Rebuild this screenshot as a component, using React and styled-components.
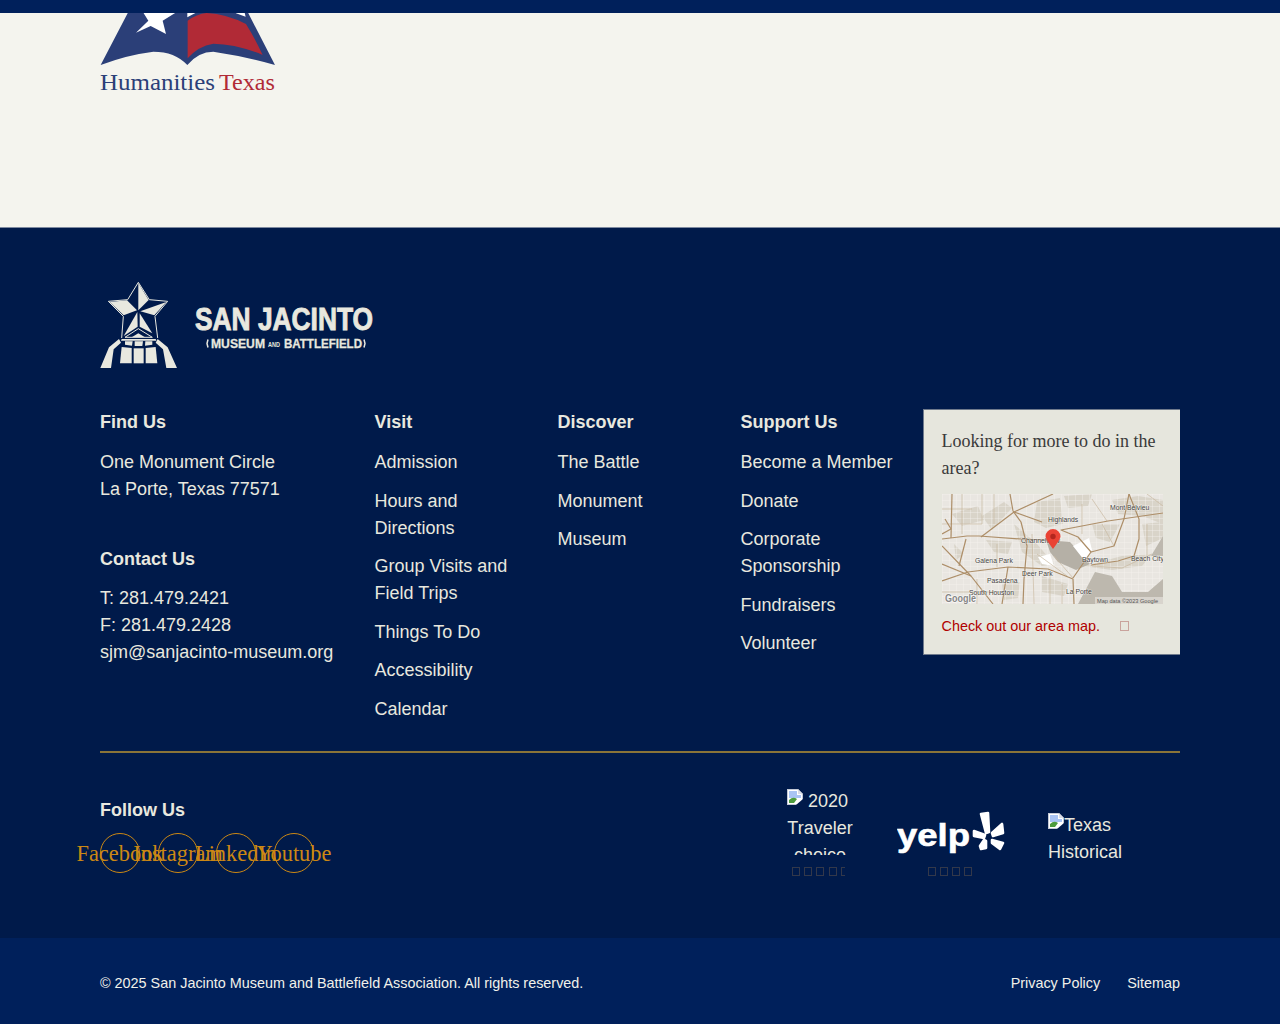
import React from 'react'
import styled, { createGlobalStyle } from 'styled-components'

const cream = '#e8e8df'
const sans = '"Liberation Sans", Arial, sans-serif'
const serif = '"Liberation Serif", "Times New Roman", serif'

const visitLinks = [
	'Admission',
	'Hours and Directions',
	'Group Visits and Field Trips',
	'Things To Do',
	'Accessibility',
	'Calendar'
]
const discoverLinks = ['The Battle', 'Monument', 'Museum']
const supportLinks = [
	'Become a Member',
	'Donate',
	'Corporate Sponsorship',
	'Fundraisers',
	'Volunteer'
]
const socials = ['Facebook', 'Instagram', 'LinkedIn', 'Youtube']

const HumanitiesLogo = () => (
	<svg width="176" height="80" viewBox="100 13 176 80">
		<g transform="translate(80 0) scale(0.3333)">
			<path
				d="M62 195 L148 30 L500 30 L585 195 Q500 170 400 155 Q355 155 322 195 Q285 155 220 155 Q140 165 62 195 Z"
				fill="#2b3f78"
			/>
			<path d="M185 30 L205 62 L168 98 L212 78 L258 102 L248 62 L300 30 Z" fill="#fff" />
			<path d="M322 30 L322 52 L348 38 L350 30 Z" fill="#fff" />
			<path d="M462 30 L468 40 L497 50 L492 30 Z" fill="#fff" />
			<path
				d="M323 62 Q350 42 380 39 Q440 42 498 72 Q525 115 548 165 Q470 132 400 131 Q355 138 323 175 Z"
				fill="#b12a36"
			/>
		</g>
		<text x="100" y="89.500" fontFamily={serif} fontSize="24" fill="#2b3f78" textLength="115" lengthAdjust="spacingAndGlyphs">
			Humanities
		</text>
		<text x="219" y="89.500" fontFamily={serif} fontSize="24" fill="#b12a36" textLength="56" lengthAdjust="spacingAndGlyphs">
			Texas
		</text>
	</svg>
)

const JacintoLogo = () => (
	<svg width="273" height="87" viewBox="0 0 273 87">
		<g transform="translate(-5 -4) scale(0.3333)" fill={cream} stroke={cream}>
			<path
				d="M130 13 L163 65 L218 70 L180 115 L188 180 M130 13 L98 65 L40 70 L85 115 L80 180"
				fill="none"
				strokeWidth="3"
			/>
			<path d="M130 15 L161 66 L130 97 Z" strokeWidth="0" />
			<path d="M44 72 L96 67 L126 97 L86 112 Z" strokeWidth="0" />
			<path d="M214 72 L136 100 L178 112 Z" strokeWidth="0" />
			<path d="M127 102 L128 146 L86 174 Z" strokeWidth="0" />
			<path d="M134 106 L172 166 L134 146 Z" strokeWidth="0" />
			<path d="M130 152 L172 178 L90 178 Z" fill="none" strokeWidth="3" />
			<path d="M130 166 L150 178 L110 178 Z" strokeWidth="0" />
			<path d="M16 270 L42 208 L72 183 L78 194 L56 214 L48 270 Z" strokeWidth="0" />
			<path d="M246 270 L218 208 L188 183 L182 194 L204 214 L214 270 Z" strokeWidth="0" />
			<path d="M80 183 L182 183 L184 188 L78 188 Z" strokeWidth="0" />
			<path d="M90 190 L113 190 L111 203 L90 200 Z" strokeWidth="0" />
			<path d="M119 190 L144 190 L142 204 L119 204 Z" strokeWidth="0" />
			<path d="M151 190 L172 190 L172 200 L150 203 Z" strokeWidth="0" />
			<path d="M80 207 L110 210 L110 256 L75 256 Z" strokeWidth="0" />
			<path d="M116 211 L146 211 L146 256 L116 256 Z" strokeWidth="0" />
			<path d="M152 210 L182 207 L187 256 L152 256 Z" strokeWidth="0" />
		</g>
		<g fill={cream} fontFamily={sans} fontWeight="700">
			<text x="95" y="48" fontSize="31" stroke={cream} strokeWidth="0.900" textLength="178" lengthAdjust="spacingAndGlyphs">
				SAN JACINTO
			</text>
			<text x="111" y="66" fontSize="13.500" stroke={cream} strokeWidth="0.300" textLength="54" lengthAdjust="spacingAndGlyphs">
				MUSEUM
			</text>
			<text x="168" y="65" fontSize="7.500" textLength="12" lengthAdjust="spacingAndGlyphs">
				AND
			</text>
			<text x="184" y="66" fontSize="13.500" stroke={cream} strokeWidth="0.300" textLength="78" lengthAdjust="spacingAndGlyphs">
				BATTLEFIELD
			</text>
		</g>
		<path d="M108 57.500 L107 61.500 L108 65.500 M264 57.500 L265 61.500 L264 65.500" fill="none" stroke={cream} strokeWidth="1.500" />
	</svg>
)

const roads = [
	'M10 0 L9 44',
	'M0 45 L25 42 L37 42 L79 45 L106 46',
	'M39 43 L72 18 L111 0',
	'M68 0 L71 17 L79 28 L85 52 L82 85 L81 110',
	'M0 87 L26 78 L66 73 L106 75 L131 85 L132 110',
	'M131 84 L149 58 L136 43 L119 36 L166 27 L221 19',
	'M149 58 L172 52 L182 25 L187 0',
	'M187 0 L197 25 L197 45 L192 62 L176 67 L149 71',
	'M0 52 L29 82 L51 110',
	'M24 45 L17 72',
	'M0 70 L29 82',
	'M3 25 L9 35 L0 40',
	'M60 110 L66 73',
	'M72 18 L100 28'
]

const minorRoads = [
	'M0 30 H40 M0 15 H30 M20 0 V40 M40 0 V30 M52 0 L52 30',
	'M95 60 L125 82 M112 62 L131 84 M90 40 L92 110 M108 78 L108 110',
	'M150 5 L165 27 M140 10 L140 40 M205 0 L221 12 M205 30 L205 62',
	'M150 72 L180 74 L210 60 M160 30 L172 52 M120 90 L120 110',
	'M35 85 L35 110 M0 98 H60 M55 50 L55 73'
]

const mapPatches = [
	'M95 8 L118 4 L121 30 L104 34 L92 28 Z',
	'M40 22 L62 8 L70 14 L50 36 Z',
	'M72 30 L95 50 L112 70 L100 72 L80 58 Z',
	'M10 20 L36 12 L42 26 L20 32 Z',
	'M170 6 L196 2 L221 6 L221 30 L200 22 L176 20 Z',
	'M200 30 L221 28 L221 44 L204 52 Z',
	'M140 72 L170 76 L200 72 L210 60 L180 62 L150 70 Z',
	'M44 46 L70 48 L66 60 L52 58 Z',
	'M122 2 L150 0 L146 12 L126 14 Z',
	'M150 30 L178 30 L168 48 L154 44 Z',
	'M60 90 L78 88 L76 104 L62 106 Z',
	'M12 50 L22 60 L14 66 Z',
	'M100 82 L126 90 L122 102 L100 98 Z'
]

const mapLabels = [
	['Mont Belvieu', 168, 15.5],
	['Highlands', 106, 27.5],
	['Channelview', 79, 48.5],
	['Galena Park', 33, 68.5],
	['Baytown', 140, 68],
	['Beach City', 189, 66.5],
	['Deer Park', 80, 81.5],
	['Pasadena', 45, 88.5],
	['La Porte', 124, 99.5],
	['South Houston', 27, 100.5]
]

const AreaMap = () => (
	<svg width="221" height="110" viewBox="0 0 221 110">
		<defs>
			<pattern id="streets" width="7" height="6" patternUnits="userSpaceOnUse">
				<path d="M0 0 H7 M0 0 V6" stroke="#f6f4f0" strokeWidth="0.7" fill="none" />
			</pattern>
		</defs>
		<rect width="221" height="110" fill="#e9e6e1" />
		<g fill="#d9d4c9">
			{mapPatches.map(d => (
				<path key={d} d={d} />
			))}
		</g>
		<rect width="221" height="110" fill="url(#streets)" />
		<path d="M104 46 L128 48 L148 70 L134 76 L116 68 L108 58 Z" fill="#b5b0a6" />
		<path d="M136 110 L153 78 L170 82 L180 98 L206 98 L221 85 L221 110 Z M209 62 L221 42 L221 62 Z" fill="#bdb8ae" />
		<path d="M131 52 L147 44 L150 56 L142 66 Z M96 63 L108 60 L112 72 L100 70 Z" fill="#fff" />
		<g fill="none" stroke="#c9b9a0" strokeWidth="0.7">
			{minorRoads.map(d => (
				<path key={d} d={d} />
			))}
		</g>
		<g fill="none" stroke="#ad8e68" strokeWidth="1.200" strokeLinejoin="round">
			{roads.map(d => (
				<path key={d} d={d} />
			))}
		</g>
		<g fontFamily={sans} fontSize="6.800" fill="#45423d" stroke="#fff" strokeWidth="1" paintOrder="stroke" strokeOpacity="0.5">
			{mapLabels.map(([label, x, y]) => (
				<text key={label} x={x} y={y}>
					{label}
				</text>
			))}
		</g>
		<rect x="153" y="103" width="68" height="7" fill="#e9e6e1" opacity="0.6" />
		<text x="155" y="109" fontFamily={sans} fontSize="5.600" fill="#555">
			Map data ©2023 Google
		</text>
		<text
			x="3"
			y="107.500"
			fontFamily={sans}
			fontSize="11.500"
			fontWeight="700"
			fill="#858585"
			stroke="#fff"
			strokeWidth="1.200"
			paintOrder="stroke"
			textLength="31"
			lengthAdjust="spacingAndGlyphs"
		>
			Google
		</text>
		<path d="M111 55 Q103.500 45 103.500 42.500 A7.500 7.500 0 0 1 118.500 42.500 Q118.500 45 111 55 Z" fill="#ea4335" />
		<circle cx="111" cy="42.500" r="2.700" fill="#b3261e" />
	</svg>
)

const YelpLogo = () => (
	<svg width="108" height="44" viewBox="897 813 108 44">
		<text
			x="897"
			y="848"
			fontFamily={sans}
			fontSize="31"
			fontWeight="700"
			fill="#fff"
			stroke="#fff"
			strokeWidth="0.600"
			textLength="73"
			lengthAdjust="spacingAndGlyphs"
		>
			yelp
		</text>
		<g fill="#fff" stroke="#fff" strokeWidth="2.600" strokeLinejoin="round">
			<path d="M981 816 L988 815 L989 834 L986 835 Z" />
			<path d="M974 833 L985 837 L984 840 L974 838 Z" />
			<path d="M1002 826 L1003 835 L993 838 L992 835 Z" />
			<path d="M984 842 L986 843 L986 850 L981 851 L980 848 Z" />
			<path d="M992 842 L1003 845 L1000 851 L992 845 Z" />
		</g>
	</svg>
)

const BrokenImage = () => (
	<BrokenIcon width="16" height="16" viewBox="0 0 16 16">
		<path d="M0 0 H11 L16 5 V16 H0 Z" fill="#c3c9d6" />
		<path d="M1 1 H10.500 L15 5.500 V15 H1 Z" fill="#fff" />
		<path d="M2 2 H10 V6 H14 V9 H2 Z" fill="#a9c4f4" />
		<path d="M2 14 L2 11 Q6 7 10 10 L7 14 Z" fill="#4d9c3d" />
		<path d="M11 0 V5 H16 Z" fill="#d9dde6" />
		<path d="M9 16 L16 10 V16 Z" fill="#001a4a" />
	</BrokenIcon>
)

const Tofus = ({ count, offset, clip }) => (
	<TofuRow $offset={offset} $clip={clip}>
		{Array.from({ length: count }, (_, i) => (
			<Tofu key={i} />
		))}
	</TofuRow>
)

const LinkColumn = ({ title, links }) => (
	<div>
		<Heading>{title}</Heading>
		{links.map(link => (
			<NavLink key={link}>{link}</NavLink>
		))}
	</div>
)

const App = () => {
	return (
		<>
			<GlobalStyle />
			<TopBar />
			<Partners>
				<HumanitiesLogo />
			</Partners>
			<Footer>
				<JacintoLogo />
				<Columns>
					<div>
						<Heading>Find Us</Heading>
						<Lines>
							One Monument Circle
							<br />
							La Porte, Texas 77571
						</Lines>
						<ContactHeading>Contact Us</ContactHeading>
						<Lines>
							T: 281.479.2421
							<br />
							F: 281.479.2428
							<br />
							sjm@sanjacinto-museum.org
						</Lines>
					</div>
					<LinkColumn title="Visit" links={visitLinks} />
					<LinkColumn title="Discover" links={discoverLinks} />
					<LinkColumn title="Support Us" links={supportLinks} />
					<MapCard>
						<MapTitle>Looking for more to do in the area?</MapTitle>
						<MapFrame>
							<AreaMap />
						</MapFrame>
						<MapLink>
							Check out our area map.
							<MapArrow />
						</MapLink>
					</MapCard>
				</Columns>
				<Divider />
				<FollowRow>
					<div>
						<FollowHeading>Follow Us</FollowHeading>
						<SocialList>
							{socials.map(name => (
								<SocialLink key={name}>{name}</SocialLink>
							))}
						</SocialList>
					</div>
					<Badges>
						<Badge>
							<AltImage $width={66} $height={68} $top={1}>
								<BrokenImage /> 2020
								<CenteredAlt>Traveler choice</CenteredAlt>
							</AltImage>
							<Tofus count={5} offset={5} clip={53} />
						</Badge>
						<Badge>
							<YelpLogo />
							<Tofus count={4} offset={31} clip={60} />
						</Badge>
						<LastBadge>
							<AltImage $width={132} $height={56} $top={0}>
								<BrokenImage />
								Texas Historical Commission
							</AltImage>
						</LastBadge>
					</Badges>
				</FollowRow>
			</Footer>
			<BottomBar>
				<span>© 2025 San Jacinto Museum and Battlefield Association. All rights reserved.</span>
				<BottomLinks>
					<span>Privacy Policy</span>
					<span>Sitemap</span>
				</BottomLinks>
			</BottomBar>
		</>
	)
}

export default App

const GlobalStyle = createGlobalStyle`
	html, body {
		margin: 0;
		padding: 0;
		background: #f4f4ee;
		font-family: ${sans};
	}
`

const TopBar = styled.div`
	height: 13px;
	background: #00205b;
`

const Partners = styled.section`
	height: 214px;
	padding: 0 100px;
	background: #f4f4ee;

	svg {
		display: block;
	}
`

const Footer = styled.footer`
	padding: 53.5px 100px 62px;
	border-top: 1px solid #7e8aa0;
	background: #001a4a;
	color: ${cream};
	font-size: 18px;
	line-height: 27px;

	> svg {
		display: block;
	}
`

const Columns = styled.div`
	display: grid;
	grid-template-columns: 274.5px 183px 183px 183px 256.5px;
	height: 341.5px;
	margin-top: 41px;
`

const Heading = styled.h3`
	margin: -0.5px 0 13.4px;
	font-size: 18px;
	line-height: 27px;
	font-weight: 700;
`

const ContactHeading = styled(Heading)`
	margin: 42.8px 0 11.7px;
`

const FollowHeading = styled(Heading)`
	margin: 0 0 9px;
`

const Lines = styled.div`
	line-height: 27px;
`

const NavLink = styled.div`
	width: 160px;
	margin-bottom: 11.5px;
`

const MapCard = styled.aside`
	align-self: start;
	height: 246px;
	margin: -0.5px 0 0 -0.5px;
	padding: 18px 18px 16px 17.5px;
	box-sizing: border-box;
	background: #e6e6dd;
	border: 1px solid #6f7a8c;
	border-right: 0;
	color: #3a3a3a;
`

const MapTitle = styled.p`
	margin: 0 0 11.5px;
	font-family: ${serif};
	font-size: 18px;
	line-height: 27px;
`

const MapFrame = styled.div`
	height: 110px;

	svg {
		display: block;
	}
`

const MapLink = styled.div`
	display: flex;
	align-items: center;
	margin-top: 9px;
	font-size: 14.4px;
	line-height: 27px;
	color: #b00000;
`

const MapArrow = styled.span`
	width: 7px;
	height: 8px;
	margin-left: 20px;
	border: 1px solid #c9a39c;
`

const Divider = styled.div`
	height: 2px;
	background: #8a7438;
`

const FollowRow = styled.div`
	display: flex;
	justify-content: space-between;
	align-items: flex-end;
	padding-top: 34px;
`

const SocialList = styled.div`
	display: flex;
	gap: 18px;
	padding-bottom: 3px;
`

const SocialLink = styled.a`
	display: flex;
	align-items: center;
	justify-content: center;
	width: 40px;
	height: 40px;
	padding-top: 1px;
	box-sizing: border-box;
	border: 1px solid #cc8814;
	border-radius: 50%;
	font-family: ${serif};
	font-size: 22.4px;
	white-space: nowrap;
	color: #cc8814;
`

const Badges = styled.div`
	display: flex;
	align-items: flex-end;
	gap: 43.5px;
`

const Badge = styled.div`
	svg {
		display: block;
	}
`

const LastBadge = styled.div`
	padding-bottom: 8px;
`

const AltImage = styled.div`
	width: ${props => props.$width}px;
	height: ${props => props.$height}px;
	padding-top: ${props => props.$top}px;
	box-sizing: border-box;
	overflow: hidden;
`

const CenteredAlt = styled.div`
	text-align: center;
`

const BrokenIcon = styled.svg`
	display: inline-block !important;
	vertical-align: 2px;
`

const TofuRow = styled.div`
	display: flex;
	gap: 4.2px;
	width: ${props => props.$clip}px;
	height: 9px;
	margin: 12px 0 0 ${props => props.$offset}px;
	overflow: hidden;
`

const Tofu = styled.span`
	flex: none;
	width: 8px;
	height: 9px;
	box-sizing: border-box;
	border: 1px solid #33384a;
`

const BottomBar = styled.div`
	display: flex;
	justify-content: space-between;
	align-items: center;
	height: 86px;
	padding: 4px 100px 0;
	box-sizing: border-box;
	background: #00205b;
	color: #f1f1ea;
	font-size: 14.4px;
`

const BottomLinks = styled.div`
	display: flex;
	gap: 27px;
`
